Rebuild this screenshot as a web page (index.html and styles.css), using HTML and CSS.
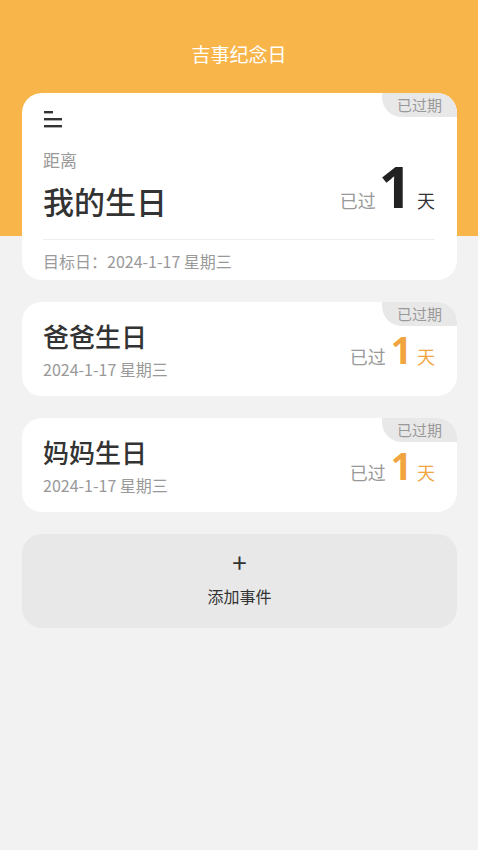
FILE: index.html
```html
<!DOCTYPE html>
<html lang="zh-CN">
<head>
    <meta charset="UTF-8">
    <meta name="viewport" content="width=device-width, initial-scale=1.0">
    <title>吉事纪念日</title>
    <link rel="stylesheet" href="styles.css">
</head>
<body>
<div class="page">
    <div class="header">吉事纪念日</div>

    <div class="list">
        <div class="card main-card">
            <span class="badge">已过期</span>
            <div class="menu-icon">
                <svg width="20" height="18" viewBox="0 0 20 18">
                    <rect x="1" y="1" width="9" height="2.4" fill="#333"/>
                    <rect x="1" y="8" width="18" height="2.4" fill="#333"/>
                    <rect x="1" y="15" width="18" height="2.4" fill="#333"/>
                </svg>
            </div>
            <div class="main-row">
                <div>
                    <div class="label">距离</div>
                    <div class="main-title">我的生日</div>
                </div>
                <div class="count big">
                    <span class="passed">已过</span>
                    <span class="num">1</span>
                    <span class="unit">天</span>
                </div>
            </div>
            <div class="divider"></div>
            <div class="target">目标日：2024-1-17 星期三</div>
        </div>

        <div class="card event">
            <span class="badge">已过期</span>
            <div>
                <div class="event-title">爸爸生日</div>
                <div class="date">2024-1-17 星期三</div>
            </div>
            <div class="count small">
                <span class="passed">已过</span>
                <span class="num">1</span>
                <span class="unit">天</span>
            </div>
        </div>

        <div class="card event">
            <span class="badge">已过期</span>
            <div>
                <div class="event-title">妈妈生日</div>
                <div class="date">2024-1-17 星期三</div>
            </div>
            <div class="count small">
                <span class="passed">已过</span>
                <span class="num">1</span>
                <span class="unit">天</span>
            </div>
        </div>

        <div class="add-btn">
            <div class="plus">+</div>
            <div class="add-text">添加事件</div>
        </div>
    </div>
</div>
</body>
</html>
```

FILE: styles.css
```css
body {
    margin: 0;
    font-family: "Noto Sans CJK SC", "Noto Sans", sans-serif;
    background: #f2f2f2;
    color: #333;
}
.page {
    min-height: 850px;
    background: linear-gradient(#f8b54a 236px, #f2f2f2 236px);
}
.header {
    height: 93px;
    line-height: 108px;
    text-align: center;
    color: #fff;
    font-size: 19px;
}
.list {
    padding: 0 21px 0 22px;
    display: flex;
    flex-direction: column;
    gap: 22px;
}
.card {
    position: relative;
    background: #fff;
    border-radius: 20px;
}
.badge {
    position: absolute;
    top: 0;
    right: 0;
    width: 75px;
    height: 24px;
    line-height: 23px;
    text-align: center;
    font-size: 15px;
    color: #999;
    background: #e8e8e8;
    border-radius: 0 20px 0 20px;
}
.main-card {
    padding: 17px 22px 9px 21px;
}
.menu-icon {
    height: 18px;
}
.menu-icon svg {
    display: block;
}
.main-row {
    display: flex;
    justify-content: space-between;
    align-items: flex-end;
    margin-top: 21px;
}
.label {
    font-size: 17px;
    line-height: 22px;
    color: #999;
}
.main-title {
    font-size: 31px;
    line-height: 40px;
    margin-top: 10px;
    color: #333;
    font-weight: 500;
}
.count {
    display: flex;
    align-items: baseline;
}
.passed {
    color: #999;
    font-size: 18px;
}
.num {
    font-weight: bold;
    font-family: "Noto Sans", "Roboto", sans-serif;
    line-height: 1;
}
.unit {
    font-size: 18px;
}
.big .num {
    font-size: 58px;
    margin: 0 5px 0 3px;
    color: #222;
}
.big {
    margin-bottom: 6px;
}
.divider {
    height: 1px;
    background: #eee;
    margin-top: 18px;
}
.target {
    margin-top: 11px;
    font-size: 16px;
    line-height: 20px;
    color: #999;
}
.event {
    height: 94px;
    padding: 0 22px 0 21px;
    box-sizing: border-box;
    display: flex;
    justify-content: space-between;
    align-items: center;
}
.event-title {
    font-size: 26px;
    line-height: 34px;
    color: #333;
    font-weight: 500;
}
.date {
    font-size: 16px;
    line-height: 20px;
    color: #999;
    margin-top: 6px;
}
.small {
    margin-top: 1px;
}
.small .num {
    font-size: 37px;
    color: #f0a540;
    margin: 0 5px 0 5px;
}
.small .unit {
    color: #f0a540;
}
.add-btn {
    height: 94px;
    border-radius: 20px;
    background: #e8e8e8;
    display: flex;
    flex-direction: column;
    align-items: center;
    justify-content: center;
}
.plus {
    font-size: 26px;
    line-height: 28px;
    color: #333;
    margin-top: -8px;
}
.add-text {
    font-size: 16px;
    line-height: 22px;
    margin-top: 9px;
    color: #333;
}
```
